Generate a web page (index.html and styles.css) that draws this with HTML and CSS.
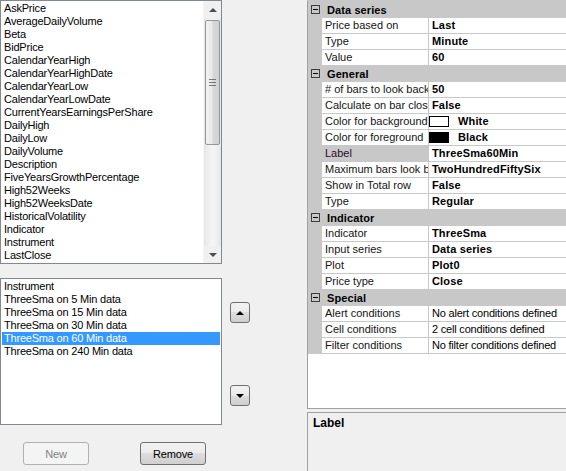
FILE: index.html
```html
<!DOCTYPE html>
<html lang="en">
<head>
  <meta charset="UTF-8">
  <title>Columns</title>
  <link rel="stylesheet" href="styles.css">
</head>
<body>
  <div class="window">
    <div class="left">
      <div class="listbox fields">
        <ul class="items">
          <li>AskPrice</li>
          <li>AverageDailyVolume</li>
          <li>Beta</li>
          <li>BidPrice</li>
          <li>CalendarYearHigh</li>
          <li>CalendarYearHighDate</li>
          <li>CalendarYearLow</li>
          <li>CalendarYearLowDate</li>
          <li>CurrentYearsEarningsPerShare</li>
          <li>DailyHigh</li>
          <li>DailyLow</li>
          <li>DailyVolume</li>
          <li>Description</li>
          <li>FiveYearsGrowthPercentage</li>
          <li>High52Weeks</li>
          <li>High52WeeksDate</li>
          <li>HistoricalVolatility</li>
          <li>Indicator</li>
          <li>Instrument</li>
          <li>LastClose</li>
        </ul>
        <div class="vscroll">
          <div class="sb-arrow"><span class="tri up"></span></div>
          <div class="sb-track">
            <div class="sb-thumb"><span class="grip"></span></div>
          </div>
          <div class="sb-arrow"><span class="tri down"></span></div>
        </div>
      </div>

      <div class="listbox columns">
        <ul class="items">
          <li>Instrument</li>
          <li>ThreeSma on 5 Min data</li>
          <li>ThreeSma on 15 Min data</li>
          <li>ThreeSma on 30 Min data</li>
          <li class="selected">ThreeSma on 60 Min data</li>
          <li>ThreeSma on 240 Min data</li>
        </ul>
      </div>

      <div class="buttons">
        <button class="btn new" disabled>New</button>
        <button class="btn remove">Remove</button>
      </div>
    </div>

    <div class="movers">
      <button class="btn move"><span class="tri up"></span></button>
      <button class="btn move down-btn"><span class="tri down"></span></button>
    </div>

    <div class="right">
      <div class="propgrid">
        <div class="cat"><span class="toggle"></span>Data series</div>
        <div class="prop"><span class="gut"></span><span class="name">Price based on</span><span class="val">Last</span></div>
        <div class="prop"><span class="gut"></span><span class="name">Type</span><span class="val">Minute</span></div>
        <div class="prop"><span class="gut"></span><span class="name">Value</span><span class="val">60</span></div>

        <div class="cat"><span class="toggle"></span>General</div>
        <div class="prop"><span class="gut"></span><span class="name"># of bars to look back</span><span class="val">50</span></div>
        <div class="prop"><span class="gut"></span><span class="name">Calculate on bar close</span><span class="val">False</span></div>
        <div class="prop"><span class="gut"></span><span class="name">Color for background</span><span class="val"><span class="swatch white"></span>White</span></div>
        <div class="prop"><span class="gut"></span><span class="name">Color for foreground</span><span class="val"><span class="swatch black"></span>Black</span></div>
        <div class="prop active"><span class="gut"></span><span class="name">Label</span><span class="val">ThreeSma60Min</span></div>
        <div class="prop"><span class="gut"></span><span class="name">Maximum bars look back</span><span class="val">TwoHundredFiftySix</span></div>
        <div class="prop"><span class="gut"></span><span class="name">Show in Total row</span><span class="val">False</span></div>
        <div class="prop"><span class="gut"></span><span class="name">Type</span><span class="val">Regular</span></div>

        <div class="cat"><span class="toggle"></span>Indicator</div>
        <div class="prop"><span class="gut"></span><span class="name">Indicator</span><span class="val">ThreeSma</span></div>
        <div class="prop"><span class="gut"></span><span class="name">Input series</span><span class="val">Data series</span></div>
        <div class="prop"><span class="gut"></span><span class="name">Plot</span><span class="val">Plot0</span></div>
        <div class="prop"><span class="gut"></span><span class="name">Price type</span><span class="val">Close</span></div>

        <div class="cat"><span class="toggle"></span>Special</div>
        <div class="prop"><span class="gut"></span><span class="name">Alert conditions</span><span class="val plain">No alert conditions defined</span></div>
        <div class="prop"><span class="gut"></span><span class="name">Cell conditions</span><span class="val plain">2 cell conditions defined</span></div>
        <div class="prop"><span class="gut"></span><span class="name">Filter conditions</span><span class="val plain">No filter conditions defined</span></div>
      </div>

      <div class="help">
        <div class="help-title">Label</div>
      </div>
    </div>
  </div>
</body>
</html>
```

FILE: styles.css
```css
body {
  margin: 0;
  background: #f0f0f0;
  font-family: "Liberation Sans", Arial, sans-serif;
  font-size: 11px;
  letter-spacing: -0.2px;
  color: #000;
  overflow: hidden;
}

.window {
  display: grid;
  grid-template-columns: 222px 85px 262px;
  height: 471px;
}

/* left side: list boxes */

.left {
  display: flex;
  flex-direction: column;
}

.listbox {
  box-sizing: border-box;
  border: 1px solid #828790;
  background: #fff;
  display: flex;
  overflow: hidden;
}

.fields {
  height: 264px;
}

.columns {
  height: 147px;
  margin-top: 14px;
}

.items {
  list-style: none;
  margin: 0;
  padding: 1px 0 0 0;
  flex: 1;
  overflow: hidden;
}

.items li {
  height: 13px;
  line-height: 13px;
  padding-left: 2px;
  margin: 0 1px;
  white-space: nowrap;
}

.items li.selected {
  background: #3399ff;
  color: #fff;
}

/* scrollbar */

.vscroll {
  width: 17px;
  display: flex;
  flex-direction: column;
  background: #f0f0f0;
  border-left: 1px solid #f7f7f7;
}

.sb-arrow {
  height: 17px;
  display: flex;
  align-items: center;
  justify-content: center;
}

.sb-track {
  flex: 1;
  padding-top: 2px;
  background: linear-gradient(to right, #e6e6e6, #f4f4f4 40%, #f4f4f4 60%, #e6e6e6);
}

.sb-thumb {
  box-sizing: border-box;
  height: 125px;
  margin: 0 1px;
  border: 1px solid #979797;
  border-radius: 2px;
  background: linear-gradient(to right, #f1f1f1, #e9e9e9 45%, #d7d7d7 55%, #d2d2d2);
  display: flex;
  align-items: center;
  justify-content: center;
}

.grip {
  width: 7px;
  height: 5px;
  border-top: 1px solid #777;
  border-bottom: 1px solid #777;
  position: relative;
}

.grip::after {
  content: "";
  position: absolute;
  left: 0;
  right: 0;
  top: 2px;
  border-top: 1px solid #777;
}

.tri {
  width: 0;
  height: 0;
  border-left: 4px solid transparent;
  border-right: 4px solid transparent;
}

.tri.up {
  border-bottom: 4px solid #000;
}

.tri.down {
  border-top: 4px solid #000;
}

.vscroll .tri.up {
  border-bottom-color: #4d4d4d;
}

.vscroll .tri.down {
  border-top-color: #4d4d4d;
}

/* buttons */

.buttons {
  display: flex;
  margin-top: 17px;
}

.btn {
  box-sizing: border-box;
  height: 23px;
  border: 1px solid #707070;
  border-radius: 3px;
  background: linear-gradient(#f2f2f2 0%, #ebebeb 50%, #dddddd 50%, #cfcfcf 100%);
  font-family: "Liberation Sans", Arial, sans-serif;
  font-size: 11px;
  letter-spacing: -0.2px;
  color: #000;
  padding: 0;
}

.btn.new {
  width: 66px;
  margin-left: 23px;
  border-color: #adb2b5;
  background: #f4f4f4;
  color: #838383;
}

.btn.remove {
  width: 66px;
  margin-left: 51px;
}

.movers {
  display: flex;
  flex-direction: column;
  align-items: flex-start;
  padding: 302px 0 0 8px;
}

.btn.move {
  width: 20px;
  height: 21px;
  display: flex;
  align-items: center;
  justify-content: center;
}

.btn.down-btn {
  margin-top: 62px;
}

/* property grid */

.right {
  display: flex;
  flex-direction: column;
}

.propgrid {
  box-sizing: border-box;
  height: 409px;
  border: 1px solid #a0a0a0;
  border-top: 2px solid #c8c8c8;
  background: #fff;
}

.cat,
.prop {
  height: 16px;
  line-height: 15px;
  white-space: nowrap;
}

.cat {
  background: #c8c8c8;
  font-weight: bold;
  letter-spacing: 0.1px;
  display: flex;
  align-items: center;
}

.toggle {
  box-sizing: border-box;
  width: 9px;
  height: 9px;
  margin: 0 7px 1px 3px;
  border: 1px solid #3c3c3c;
  position: relative;
}

.toggle::after {
  content: "";
  position: absolute;
  left: 1px;
  right: 1px;
  top: 3px;
  border-top: 1px solid #000;
}

.prop {
  display: grid;
  grid-template-columns: 14px 107px 1fr;
}

.gut {
  background: #c8c8c8;
}

.name,
.val {
  box-sizing: border-box;
  height: 16px;
  border-bottom: 1px solid #c8c8c8;
  overflow: hidden;
}

.name {
  padding-left: 3px;
  border-right: 1px solid #c8c8c8;
  color: #141414;
  letter-spacing: 0;
}

.prop.active .name {
  background: #c8c8c8;
  color: #2b0a2b;
}

.val {
  padding-left: 3px;
  font-weight: bold;
  letter-spacing: 0.15px;
  display: flex;
  align-items: center;
}

.val.plain {
  font-weight: normal;
  letter-spacing: -0.2px;
}

.swatch {
  box-sizing: border-box;
  width: 20px;
  height: 11px;
  margin: 0 9px 0 -3px;
  border: 1px solid #000;
}

.swatch.white {
  background: #fff;
}

.swatch.black {
  background: #000;
}

.help {
  box-sizing: border-box;
  height: 70px;
  margin-top: 3px;
  border: 1px solid #a0a0a0;
  border-right: none;
  padding: 3px 5px;
}

.help-title {
  font-weight: bold;
  font-size: 12px;
  letter-spacing: 0;
}
```
